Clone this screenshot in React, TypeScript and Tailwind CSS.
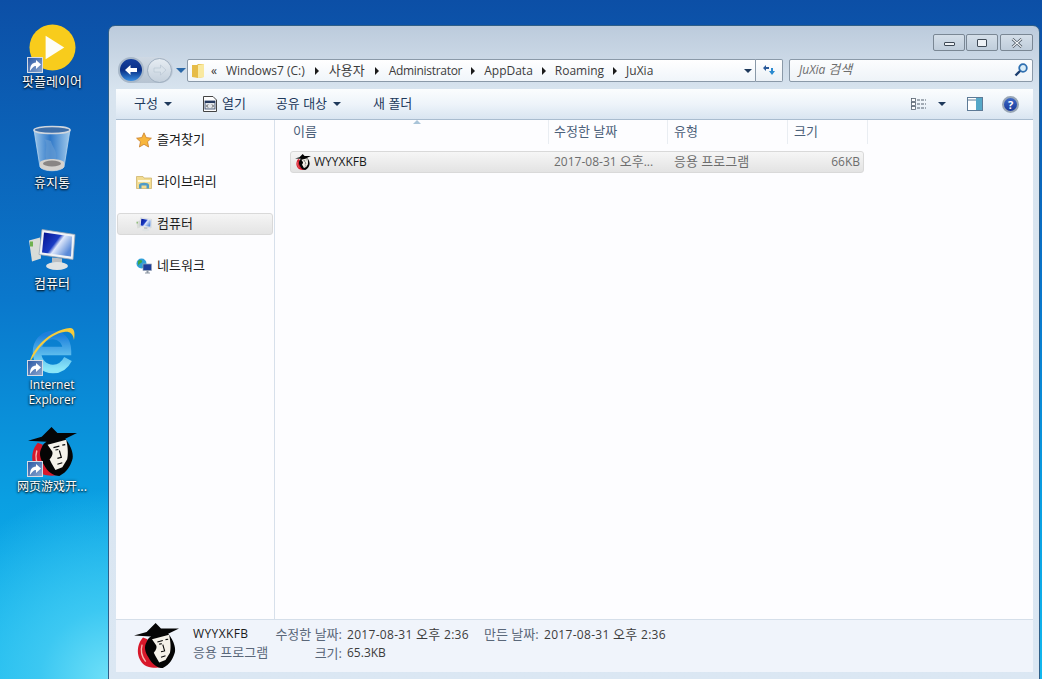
import { ReactNode } from 'react'

function SpyIcon({ className = '' }: { className?: string }) {
  return (
    <svg viewBox="0 0 50 50" className={className}>
      <path d="M10 16C1 26 3 42 14 48C20 50 26 50 30 49C20 46 12 34 15 18Z" fill="#d8182a" />
      <path d="M9 24C7 31 9 38 13 43" fill="none" stroke="#f3b7b0" strokeWidth="1.500" />
      <path d="M0 14L14 10L24 0L30 6L50 6L38 12C45 20 47 30 45 34C43 40 40 46 32 50C26 50 20 46 16 38C12 32 11 26 14 21C15 18 17 16 19 15Z" fill="#050505" />
      <path d="M20 18L39 13C41 22 41 28 40 33L35 41L28 44L24 37L22 33C25 30 26 26 24 24Z" fill="#f5f2ea" />
      <path d="M26 21L32 19.500M35 18.500L38 18M28 23.500L31 23M32 24L34 31L30 32M30 38L35 36.500" fill="none" stroke="#050505" strokeWidth="1.200" />
    </svg>
  )
}

function ShortcutBadge() {
  return (
    <div className="absolute bottom-[-1px] left-[2px] flex h-[16px] w-[16px] items-center justify-center border border-[#d5dbe4] bg-gradient-to-br from-[#2c5aa6] to-[#8aa4cc]">
      <svg viewBox="0 0 14 14" className="h-[14px] w-[14px]">
        <path d="M2 13C2 7 4 5 8 4.500V2L13 6.500L8 11V8C5.500 8 4 10 2 13Z" fill="#fff" />
      </svg>
    </div>
  )
}

function PlayerIcon() {
  return (
    <svg viewBox="0 0 48 48" className="h-[47px] w-[47px]">
      <circle cx="24" cy="24" r="23.500" fill="#f8cc1c" />
      <path d="M17 12L36 24L17 36Z" fill="#fdfdf6" />
    </svg>
  )
}

function BinIcon() {
  return (
    <svg viewBox="0 0 40 48" className="h-[48px] w-[40px]">
      <defs>
        <linearGradient id="binBody" x1="0" y1="0" x2="1" y2="0">
          <stop offset="0" stopColor="#9cc6ea" />
          <stop offset="0.45" stopColor="#2f78c8" />
          <stop offset="1" stopColor="#a2cbec" />
        </linearGradient>
      </defs>
      <path d="M2 5L8 42C12 47 28 47 32 42L38 5Z" fill="url(#binBody)" stroke="#b8d6ef" strokeWidth="0.8" />
      <path d="M8 37C12 33 28 33 32 37L32 42C28 47 12 47 8 42Z" fill="#d5d2ce" />
      <ellipse cx="20" cy="38.500" rx="9" ry="3" fill="#8a8684" />
      <path d="M12 14C17 20 12 26 14 34L24 34C26 26 20 22 19 16Z" fill="#5f97d2" opacity="0.8" />
      <ellipse cx="20" cy="5" rx="18" ry="3.500" fill="#3f6fa8" stroke="#cfd6de" strokeWidth="1.600" />
    </svg>
  )
}

function ComputerIcon({ className = '' }: { className?: string }) {
  return (
    <svg viewBox="0 0 48 42" className={className}>
      <defs>
        <linearGradient id="pcScreen" x1="0" y1="0" x2="1" y2="0.600">
          <stop offset="0" stopColor="#03108c" />
          <stop offset="0.5" stopColor="#1a3cc4" />
          <stop offset="0.62" stopColor="#dfe8fb" />
          <stop offset="1" stopColor="#5a8ad8" />
        </linearGradient>
      </defs>
      <path d="M1 12L12 9L13 30L4 33Z" fill="#d9dcd8" />
      <rect x="2" y="13" width="3" height="5" fill="#6fb14f" />
      <path d="M14 1L47 6L45 31L11 26Z" fill="#f0f3f7" stroke="#9aa6b4" strokeWidth="0.8" />
      <path d="M16 4L44 8L43 28L14 24Z" fill="url(#pcScreen)" />
      <path d="M24 29L34 30L34 35L24 34Z" fill="#b9bec2" />
      <ellipse cx="29" cy="37.500" rx="11" ry="4" fill="#dfe3e4" />
    </svg>
  )
}

function IeIcon() {
  return (
    <svg viewBox="0 0 48 48" className="h-[48px] w-[48px]">
      <defs>
        <linearGradient id="ieBlue" x1="0" y1="0" x2="0" y2="1">
          <stop offset="0" stopColor="#1c7fdc" />
          <stop offset="1" stopColor="#8ae6f8" />
        </linearGradient>
      </defs>
      <path d="M10 24H39C39 13 32 8 25 8C15 8 9 16 9 25C9 35 16 42 25 42C32 42 37 38 40 32" fill="none" stroke="url(#ieBlue)" strokeWidth="8.500" />
      <path d="M1 38C3 22 22 3 42 1C47 1 47 7 46 13C45 6 41 4 36 5C22 7 8 22 1 38Z" fill="#f6cc3c" />
    </svg>
  )
}

function StarIcon() {
  return (
    <svg viewBox="0 0 16 16" className="h-4 w-4">
      <path d="M8 0.800L10.200 5.600L15.400 6.200L11.500 9.700L12.600 15L8 12.300L3.400 15L4.500 9.700L0.600 6.200L5.800 5.600Z" fill="#f8b63c" stroke="#c97f2c" strokeWidth="0.8" />
    </svg>
  )
}

function LibraryIcon() {
  return (
    <svg viewBox="0 0 16 16" className="h-4 w-4">
      <path d="M0.500 2.500H7L8 4H15.500V14.500H0.500Z" fill="#f2dc92" stroke="#c9ad62" strokeWidth="0.7" />
      <path d="M2 6H14V8H2Z" fill="#fdf8df" />
      <path d="M3 14.500V11C3 8 13 8 13 11V14.500H10.500V11.500H5.500V14.500Z" fill="#4f9bc8" />
    </svg>
  )
}

function NetworkIcon() {
  return (
    <svg viewBox="0 0 16 16" className="h-4 w-4">
      <circle cx="5.500" cy="5.500" r="5" fill="#2f9fd8" />
      <path d="M2 3C4 1 7 2 6 4C5 6 3 5 2 8ZM6 9C8 8 10 9 9 10Z" fill="#3fa648" />
      <rect x="7" y="6" width="8.500" height="6.500" fill="#1d3f9c" stroke="#9aa6b4" strokeWidth="0.7" />
      <path d="M10.500 12.500H12.500V14.500H14V15.500H9V14.500H10.500Z" fill="#8e98a4" />
    </svg>
  )
}

function Caret({ className = '' }: { className?: string }) {
  return <span className={`inline-block h-0 w-0 border-x-[4px] border-t-[4px] border-x-transparent border-t-[#1e395b] ${className}`} />
}

function Crumb({ children, tight }: { children: ReactNode; tight?: boolean }) {
  return (
    <>
      {children}
      <span className={`inline-block h-0 w-0 border-y-[4px] border-l-[4px] border-y-transparent border-l-[#1a1a1a] ${tight ? 'mx-[9px]' : 'mx-[10px]'}`} />
    </>
  )
}

function Ko({ children }: { children: ReactNode }) {
  return <span className="text-[13px]">{children}</span>
}

function DesktopIcon({ icon, label, shortcut }: { icon: ReactNode; label: ReactNode; shortcut?: boolean }) {
  return (
    <div className="flex h-[101px] w-[104px] flex-col items-center">
      <div className="relative flex h-[49px] w-[54px] items-center justify-center">
        {icon}
        {shortcut && <ShortcutBadge />}
      </div>
      <div className="mt-[2px] text-center text-[12px] leading-[15px] text-white [text-shadow:0_1px_2px_#000,0_0_3px_#000a]">{label}</div>
    </div>
  )
}

function NavItem({ icon, label, active }: { icon: ReactNode; label: string; active?: boolean }) {
  return (
    <div className={`flex h-[22px] items-center gap-[5px] rounded-[3px] border pl-[18px] text-[13px] text-[#1a1a1a] ${active ? 'border-[#d9d9d9] bg-gradient-to-b from-[#f5f5f5] to-[#e4e4e4]' : 'border-transparent'}`}>
      <div className="flex h-4 w-4 items-center justify-center">{icon}</div>
      <span>{label}</span>
    </div>
  )
}

function ColHead({ label, className }: { label: string; className: string }) {
  return <div className={`flex h-full items-center border-r border-[#e9edf2] ${className}`}>{label}</div>
}

export default function App() {
  return (
    <div className="relative h-[679px] w-[1042px] overflow-hidden bg-[radial-gradient(circle_at_110px_679px,#6fe0f8_0%,#3cc8f2_70px,transparent_190px),linear-gradient(180deg,#0c4fa6_0px,#0a78cc_300px,#0a9fe2_500px,#12b8ee_679px)] [font-family:'Open_Sans','Noto_Sans_CJK_KR',sans-serif]">
      <div className="flex flex-col pt-[23px]">
        <DesktopIcon icon={<PlayerIcon />} label={<Ko>팟플레이어</Ko>} shortcut />
        <DesktopIcon icon={<BinIcon />} label={<Ko>휴지통</Ko>} />
        <DesktopIcon icon={<ComputerIcon className="h-[43px] w-[48px]" />} label={<Ko>컴퓨터</Ko>} />
        <DesktopIcon
          icon={<IeIcon />}
          label={
            <>
              Internet
              <br />
              Explorer
            </>
          }
          shortcut
        />
        <DesktopIcon
          icon={<SpyIcon className="h-[49px] w-[49px]" />}
          label={<span className="[font-family:'Noto_Sans_CJK_SC',sans-serif]">网页游戏开...</span>}
          shortcut
        />
      </div>

      <div className="absolute left-[108px] top-[25px] flex h-[660px] w-[932px] flex-col rounded-t-[7px] border border-[#2f5f88] bg-[linear-gradient(180deg,#bccbdc_0px,#d8e4ef_65px,#dbe7f3_100%)] pb-[12px] pl-[7px] pr-[6px]">
        <div className="flex h-[32px] shrink-0 items-start justify-end gap-[1px] pt-[8px]">
          <div className="flex h-[17px] w-[32px] items-center justify-center rounded-[2px] border border-[#7a8794] bg-gradient-to-b from-[#d5dfe9] to-[#bfcddb]">
            <span className="mt-[2px] h-[4px] w-[11px] rounded-[1px] border border-[#3f4a56] bg-[#eef2f6]" />
          </div>
          <div className="flex h-[17px] w-[32px] items-center justify-center rounded-[2px] border border-[#7a8794] bg-gradient-to-b from-[#d5dfe9] to-[#bfcddb]">
            <span className="h-[8px] w-[10px] rounded-[1px] border border-[#3f4a56] bg-[#eef2f6]" />
          </div>
          <div className="ml-px flex h-[17px] w-[33px] items-center justify-center rounded-[2px] border border-[#7a8794] bg-gradient-to-b from-[#d5dfe9] to-[#bfcddb]">
            <svg viewBox="0 0 12 10" className="h-[10px] w-[12px]">
              <path d="M1.500 1L10.500 9M10.500 1L1.500 9" stroke="#3f4a56" strokeWidth="2.600" />
              <path d="M1.500 1L10.500 9M10.500 1L1.500 9" stroke="#f2f5f8" strokeWidth="1.200" />
            </svg>
          </div>
        </div>

        <div className="flex h-[24px] shrink-0 items-center">
          <div className="flex w-[71px] shrink-0 items-center pl-[2px]">
            <div className="flex h-[26px] w-[55px] shrink-0 items-center rounded-full bg-gradient-to-b from-[#cfd9e4] to-[#b6c3d1]">
              <div className="flex h-[26px] w-[26px] shrink-0 items-center justify-center rounded-full border-2 border-[#a8b8c9] bg-gradient-to-b from-[#16409e] via-[#0b2f86] to-[#3c8fe2]">
                <svg viewBox="0 0 14 12" className="h-[12px] w-[14px]">
                  <path d="M1 6L6.500 1V4H13V8H6.500V11Z" fill="#fff" />
                </svg>
              </div>
              <div className="ml-[3px] flex h-[25px] w-[25px] shrink-0 items-center justify-center rounded-full border border-[#9fafc0] bg-gradient-to-b from-[#e6ecf2] to-[#c4d0dc]">
                <svg viewBox="0 0 14 12" className="h-[12px] w-[14px]">
                  <path d="M13 6L7.500 1V4H1V8H7.500V11Z" fill="#d9e2ea" stroke="#aebccb" strokeWidth="0.5" />
                </svg>
              </div>
            </div>
            <span className="ml-[3px] inline-block h-0 w-0 shrink-0 border-x-[5px] border-t-[5px] border-x-transparent border-t-[#2a68a8]" />
          </div>
          <div className="flex h-[23px] w-[569px] shrink-0 items-center rounded-l-[2px] border border-[#8a99a8] bg-gradient-to-b from-[#fff] to-[#f0f5fa] pt-[2px] text-[12px] text-[#3c3c3c]">
            <svg viewBox="0 0 14 16" className="ml-[3px] h-[16px] w-[14px]">
              <path d="M1 2H6L7 1H13V14L7 15L1 14Z" fill="#e6bc48" />
              <path d="M7 2L13 1V14L7 15Z" fill="#f9e9a0" />
            </svg>
            <span className="ml-[6px] mr-[9px] text-[#333]">«</span>
            <Crumb>Windows7 (C:)</Crumb>
            <Crumb><Ko>사용자</Ko></Crumb>
            <Crumb tight><span className="tracking-[-0.3px]">Administrator</span></Crumb>
            <Crumb tight>AppData</Crumb>
            <Crumb tight>Roaming</Crumb>
            <span>JuXia</span>
            <Caret className="ml-auto mr-[3px]" />
          </div>
          <div className="flex h-[23px] w-[27px] shrink-0 items-center justify-center rounded-r-[2px] border border-l-0 border-[#8a99a8] bg-gradient-to-b from-[#fff] to-[#eaf0f6]">
            <svg viewBox="0 0 14 12" className="h-[12px] w-[14px]">
              <path d="M1 4L4 1V3H7V5H4V7Z" fill="#2a5a9a" />
              <path d="M13 7L10 11L7 7H9V4H11V7Z" fill="#2a8ad0" />
            </svg>
          </div>
          <div className="ml-[6px] flex h-[23px] w-[244px] shrink-0 items-center justify-between rounded-[2px] border border-[#8a99a8] bg-gradient-to-b from-[#fcfdfe] to-[#eef3f8] pl-[9px] pr-[3px] text-[12px] italic text-[#6d6d6d]">
            <span>JuXia <Ko>검색</Ko></span>
            <svg viewBox="0 0 16 16" className="h-4 w-4">
              <circle cx="10" cy="6" r="3.800" fill="#d8ecf8" stroke="#2f6fb0" strokeWidth="1.800" />
              <path d="M7 9L2.500 13.500" stroke="#1b3e70" strokeWidth="2.400" />
            </svg>
          </div>
        </div>

        <div className="mt-[7px] flex min-h-0 flex-1 flex-col">
          <div className="flex h-[31px] shrink-0 items-center border-b border-[#a9bccf] bg-gradient-to-b from-[#fbfdfe] via-[#eef4fa] to-[#d9e5f1] pl-[18px] pr-[14px] text-[13px] text-[#1e395b]">
            <span>구성</span>
            <Caret className="ml-[6px]" />
            <svg viewBox="0 0 14 16" className="ml-[31px] h-4 w-[14px]">
              <path d="M0.500 0.500H10L13.500 4V15.500H0.500Z" fill="#fdfdfd" stroke="#444" />
              <rect x="2" y="5" width="10" height="8" fill="#e2e6ea" stroke="#263a5e" strokeWidth="0.8" />
              <rect x="2" y="5" width="10" height="2" fill="#263a5e" />
              <path d="M5 8.500L3.500 10L5 11.500M9 8.500L10.500 10L9 11.500" stroke="#1a1a1a" strokeWidth="0.8" fill="none" />
            </svg>
            <span className="ml-[5px]">열기</span>
            <span className="ml-[30px]">공유 대상</span>
            <Caret className="ml-[6px]" />
            <span className="ml-[32px]">새 폴더</span>
            <svg viewBox="0 0 16 12" className="ml-auto h-[12px] w-[16px]">
              <rect x="0.500" y="0.500" width="4" height="3" fill="#fff" stroke="#55606e" strokeWidth="0.8" />
              <rect x="0.500" y="4.500" width="4" height="3" fill="#fff" stroke="#55606e" strokeWidth="0.8" />
              <rect x="0.500" y="8.500" width="4" height="3" fill="#fff" stroke="#55606e" strokeWidth="0.8" />
              <path d="M6 2H15M6 6H15M6 10H15" stroke="#55606e" strokeWidth="1" strokeDasharray="3 1" />
            </svg>
            <Caret className="ml-[11px]" />
            <svg viewBox="0 0 16 14" className="ml-[21px] h-[14px] w-[16px]">
              <rect x="0.500" y="0.500" width="15" height="13" fill="#fff" stroke="#5d7a96" />
              <rect x="9" y="1" width="6" height="12" fill="#56a8c8" />
              <path d="M1 3H9" stroke="#5d7a96" />
            </svg>
            <div className="ml-[19px] flex h-[17px] w-[17px] items-center justify-center rounded-full border-2 border-[#98a6b6] bg-gradient-to-b from-[#3c68c8] to-[#1a3a9a] text-[11px] font-bold leading-none text-white">?</div>
          </div>

          <div className="flex min-h-0 flex-1 bg-[#fdfdff]">
            <div className="flex w-[159px] shrink-0 flex-col gap-[20px] border-r border-[#d7e0eb] px-[1px] pt-[9px]">
              <NavItem icon={<StarIcon />} label="즐겨찾기" />
              <NavItem icon={<LibraryIcon />} label="라이브러리" />
              <NavItem icon={<ComputerIcon className="h-[15px] w-[17px]" />} label="컴퓨터" active />
              <NavItem icon={<NetworkIcon />} label="네트워크" />
            </div>
            <div className="relative min-w-0 flex-1 pl-[15px]">
              <span className="absolute left-[138px] top-0 h-0 w-0 border-x-[4px] border-b-[4px] border-x-transparent border-b-[#a9c4d8]" />
              <div className="flex h-[24px] text-[13px] text-[#4c607a]">
                <ColHead label="이름" className="w-[259px] pl-[3px]" />
                <ColHead label="수정한 날짜" className="w-[119px] pl-[5px]" />
                <ColHead label="유형" className="w-[120px] pl-[6px]" />
                <ColHead label="크기" className="w-[80px] pl-[6px]" />
              </div>
              <div className="mt-[7px] flex h-[22px] w-[574px] items-center rounded-[3px] border border-[#d9d9d9] bg-gradient-to-b from-[#f6f6f6] to-[#e3e3e3] text-[12px] text-[#6d6d6d]">
                <SpyIcon className="ml-[4px] h-[16px] w-[16px]" />
                <span className="ml-[3px] w-[240px] text-[#1a1a1a]">WYYXKFB</span>
                <span className="w-[120px]">2017-08-31 <Ko>오후</Ko>...</span>
                <Ko>응용 프로그램</Ko>
                <span className="ml-auto mr-[3px]">66KB</span>
              </div>
            </div>
          </div>

          <div className="flex h-[53px] shrink-0 items-start border-t border-[#d5dfea] bg-[#f0f4fb] pl-[18px] text-[12px] leading-[18px] text-[#5a6779]">
            <SpyIcon className="mt-[3px] h-[45px] w-[45px]" />
            <div className="ml-[14px] mt-[5px] w-[72px] whitespace-nowrap">
              <div className="tracking-[0.4px] text-[#1a1a1a]">WYYXKFB</div>
              <div><Ko>응용 프로그램</Ko></div>
            </div>
            <div className="mt-[5px] w-[77px] text-right">
              <div><Ko>수정한 날짜:</Ko></div>
              <div><Ko>크기:</Ko></div>
            </div>
            <div className="ml-[5px] mt-[5px] w-[137px] text-[#3c3c3c]">
              <div className="tracking-[0.3px]">2017-08-31 <Ko>오후</Ko> 2:36</div>
              <div>65.3KB</div>
            </div>
            <div className="mt-[5px] w-[56px]"><Ko>만든 날짜:</Ko></div>
            <div className="ml-[4px] mt-[5px] tracking-[0.3px] text-[#3c3c3c]">2017-08-31 <Ko>오후</Ko> 2:36</div>
          </div>
        </div>
      </div>
    </div>
  )
}
